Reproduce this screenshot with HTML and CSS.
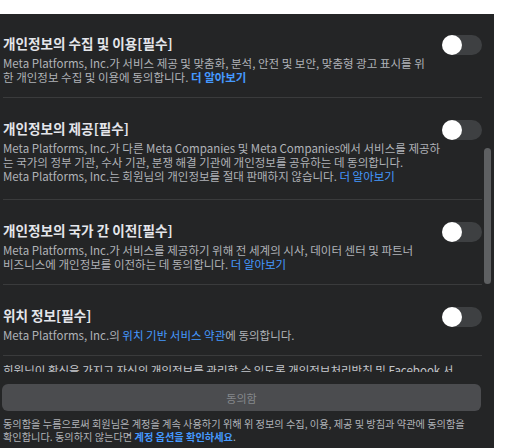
FILE: index.html
```html
<!doctype html>
<html>
<head>
    <meta charset="utf-8">
    <title>동의</title>
    <link rel="stylesheet" href="styles.css">
</head>

<body>
    <div class="dialog">
        <div class="scroll">
            <div class="item first">
                <div class="item-text">
                    <div class="item-title">개인정보의 수집 및 이용[필수]</div>
                    <div class="item-desc">Meta Platforms, Inc.가 서비스 제공 및 맞춤화, 분석, 안전 및 보안, 맞춤형 광고 표시를 위<br>한 개인정보 수집 및 이용에 동의합니다. <a class="more bold">더 알아보기</a></div>
                </div>
                <span class="switch"></span>
            </div>

            <div class="item tall">
                <div class="item-text">
                    <div class="item-title">개인정보의 제공[필수]</div>
                    <div class="item-desc">Meta Platforms, Inc.가 다른 Meta Companies 및 Meta Companies에서 서비스를 제공하<br>는 국가의 정부 기관, 수사 기관, 분쟁 해결 기관에 개인정보를 공유하는 데 동의합니다.<br>Meta Platforms, Inc.는 회원님의 개인정보를 절대 판매하지 않습니다. <a class="more">더 알아보기</a></div>
                </div>
                <span class="switch"></span>
            </div>

            <div class="item">
                <div class="item-text">
                    <div class="item-title">개인정보의 국가 간 이전[필수]</div>
                    <div class="item-desc">Meta Platforms, Inc.가 서비스를 제공하기 위해 전 세계의 시사, 데이터 센터 및 파트너<br>비즈니스에 개인정보를 이전하는 데 동의합니다. <a class="more">더 알아보기</a></div>
                </div>
                <span class="switch"></span>
            </div>

            <div class="item">
                <div class="item-text">
                    <div class="item-title">위치 정보[필수]</div>
                    <div class="item-desc">Meta Platforms, Inc.의 <a class="more">위치 기반 서비스 약관</a>에 동의합니다.</div>
                </div>
                <span class="switch"></span>
            </div>

            <p class="note">회원님이 확신을 가지고 자신의 개인정보를 관리할 수 있도록 개인정보처리방침 및 Facebook 서</p>
        </div>

        <div class="thumb"></div>

        <div class="footer">
            <button class="agree" type="button">동의함</button>
            <p class="legal">동의함을 누름으로써 회원님은 계정을 계속 사용하기 위해 위 정보의 수집, 이용, 제공 및 방침과 약관에 동의함을<br>확인합니다. 동의하지 않는다면 <a class="more bold">계정 옵션을 확인하세요</a>.</p>
        </div>
    </div>
</body>
</html>
```

FILE: styles.css
```css
* {
  box-sizing: border-box;
}

body {
  margin: 0;
  background: #ffffff;
  font-family: "Noto Sans CJK KR", "Noto Sans", sans-serif;
}

.dialog {
  position: relative;
  margin-top: 14px;
  width: 494px;
  height: 434px;
  background: #242526;
  overflow: hidden;
}

.scroll {
  height: 358px;
  overflow: hidden;
  padding: 0 12px 0 3px;
}

.item {
  display: flex;
  padding: 22px 0 13px;
  border-bottom: 1px solid #3a3b3c;
}

.item.first {
  padding-top: 21px;
}

.item.tall {
  padding-bottom: 16px;
}

.item-text {
  flex: 1;
  min-width: 0;
}

.item-title {
  font-size: 13.6px;
  font-weight: bold;
  line-height: 17px;
  color: #e4e6eb;
}

.item-desc {
  margin-top: 4px;
  font-size: 11.5px;
  line-height: 14px;
  white-space: nowrap;
  color: #b0b3b8;
}

.more {
  color: #4599ff;
  cursor: pointer;
}

.bold {
  font-weight: bold;
}

.switch {
  position: relative;
  flex: none;
  width: 40px;
  height: 20px;
  border-radius: 10px;
  background: #3e4042;
}

.switch::after {
  content: "";
  position: absolute;
  left: 0;
  top: 0;
  width: 20px;
  height: 20px;
  border-radius: 50%;
  background: #ffffff;
}

.note {
  margin: 7px 0 0;
  font-size: 11.5px;
  line-height: 14px;
  white-space: nowrap;
  color: #c4c7cc;
}

/* scrollbar thumb over the list */
.thumb {
  position: absolute;
  left: 484px;
  top: 134px;
  width: 7px;
  height: 136px;
  border-radius: 4px;
  background: #5e6062;
}

.footer {
  padding: 12px 13px 0 2px;
  background: #242526;
}

.agree {
  display: block;
  width: 479px;
  height: 27px;
  border: 0;
  border-radius: 6px;
  background: #4b4c4f;
  color: #85888c;
  font: 11px "Noto Sans CJK KR", sans-serif;
}

.legal {
  margin: 6px 0 0 1px;
  font-size: 10.2px;
  line-height: 13.4px;
  white-space: nowrap;
  color: #b0b3b8;
}
```
